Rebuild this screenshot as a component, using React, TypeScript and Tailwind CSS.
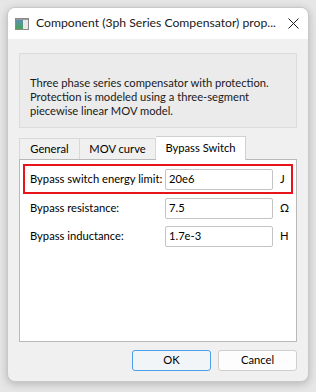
import React from "react";

const font = { fontFamily: 'Lato, "Noto Sans", sans-serif' };

function Row({ label, value, unit }: { label: string; value: string; unit: string }) {
  return (
    <div className="flex items-center h-full">
      <div className="w-[135px] shrink-0 text-[11.2px] text-black whitespace-nowrap">{label}</div>
      <div className="w-[108px] h-[21px] shrink-0 border border-[#c4c4c4] rounded-[2px] bg-white flex items-center pl-[3px] text-[11.2px] text-black">
        {value}
      </div>
      <div className="pl-[7px] text-[11.2px] text-black">{unit}</div>
    </div>
  );
}

export default function App() {
  return (
    <div className="w-[316px] h-[392px] bg-[#e6e6e6] pt-[7px] pl-[7px]" style={font}>
      <div className="w-[302px] h-[375px] rounded-[8px] border border-[#c8c8c8] bg-[#f0f0f0] shadow-[0_2px_8px_rgba(0,0,0,0.22)] overflow-hidden flex flex-col">
        {/* Title bar */}
        <div className="h-[31px] bg-white flex items-center pl-[7px] pr-[9px] shrink-0">
          <svg width="14" height="12" viewBox="0 0 14 12" className="shrink-0">
            <defs>
              <linearGradient id="g" x1="0" y1="0" x2="0" y2="1">
                <stop offset="0" stopColor="#5b8fb0" />
                <stop offset="1" stopColor="#4aa35a" />
              </linearGradient>
            </defs>
            <rect x="0.5" y="0.5" width="13" height="11" fill="#e8e8e8" stroke="#8a8a8a" />
            <rect x="1" y="2" width="7" height="9" fill="url(#g)" />
            <rect x="1" y="1" width="12" height="1" fill="#9a9a9a" />
          </svg>
          <div className="ml-[7px] text-[12.2px] text-[#1a1a1a] whitespace-nowrap flex-1">
            Component (3ph Series Compensator) prop...
          </div>
          <svg width="11" height="11" viewBox="0 0 11 11" className="shrink-0 ml-2">
            <path d="M0.5 0.5 L10.5 10.5 M10.5 0.5 L0.5 10.5" stroke="#1a1a1a" strokeWidth="1" />
          </svg>
        </div>

        {/* Content */}
        <div className="flex-1 flex flex-col px-[11px] pt-[14px]">
          <div className="h-[75px] bg-[#ebebeb] border border-[#dcdcdc] flex flex-col justify-end pl-[10px] pb-[9px] text-[11.2px] leading-[14px] text-[#1a1a1a]">
            <div>Three phase series compensator with protection.</div>
            <div>Protection is modeled using a three-segment</div>
            <div>piecewise linear MOV model.</div>
          </div>

          {/* Tabs */}
          <div className="mt-[8px] h-[23px] flex items-end relative">
            <div className="w-[61px] h-[21px] border border-[#d9d9d9] border-b-0 bg-[#f0f0f0] flex items-center justify-center text-[11.2px] text-black">
              General
            </div>
            <div className="w-[76px] h-[21px] border border-[#d9d9d9] border-l-0 border-b-0 bg-[#f0f0f0] flex items-center justify-center text-[11.2px] text-black">
              MOV curve
            </div>
            <div className="w-[90px] h-[24px] border border-[#d0d0d0] border-l-0 border-b-0 bg-white flex items-center justify-center text-[11.2px] text-black relative z-10 -mb-px">
              Bypass Switch
            </div>
          </div>

          {/* Panel */}
          <div className="h-[183px] bg-white border border-[#b9b9b9] pt-[4px] px-[3px] flex flex-col">
            <div className="h-[30px] border-2 border-[#e8141b] pl-[5px]">
              <Row label="Bypass switch energy limit:" value="20e6" unit="J" />
            </div>
            <div className="h-[28px] pl-[7px]">
              <Row label="Bypass resistance:" value="7.5" unit="Ω" />
            </div>
            <div className="h-[28px] pl-[7px]">
              <Row label="Bypass inductance:" value="1.7e-3" unit="H" />
            </div>
          </div>

          {/* Buttons */}
          <div className="mt-[8px] flex justify-end gap-[7px]">
            <button className="w-[79px] h-[21px] rounded-[3px] border border-[#4ca0e8] bg-[#f2f5f8] text-[11.2px] text-black flex items-center justify-center">
              OK
            </button>
            <button className="w-[79px] h-[21px] rounded-[3px] border border-[#cfcfcf] bg-[#fdfdfd] text-[11.2px] text-black flex items-center justify-center">
              Cancel
            </button>
          </div>
        </div>
      </div>
    </div>
  );
}
